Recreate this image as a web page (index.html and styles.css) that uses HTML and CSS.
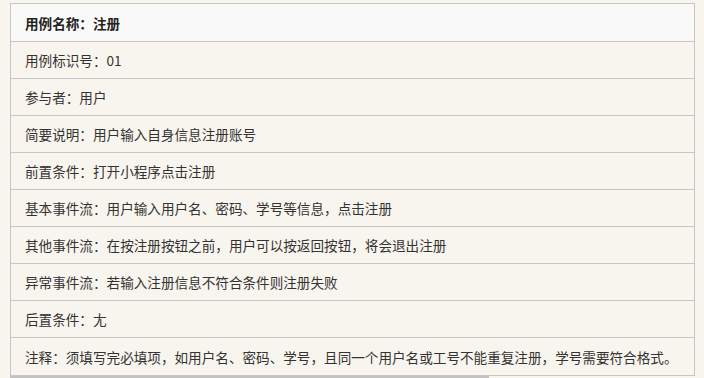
FILE: index.html
```html
<!DOCTYPE html>
<html lang="zh-CN">
<head>
<meta charset="utf-8">
<title>用例：注册</title>
<link rel="stylesheet" href="styles.css">
</head>
<body>
<div class="usecase">
  <div class="row head">用例名称：注册</div>
  <div class="row">用例标识号：01</div>
  <div class="row">参与者：用户</div>
  <div class="row">简要说明：用户输入自身信息注册账号</div>
  <div class="row">前置条件：打开小程序点击注册</div>
  <div class="row">基本事件流：用户输入用户名、密码、学号等信息，点击注册</div>
  <div class="row">其他事件流：在按注册按钮之前，用户可以按返回按钮，将会退出注册</div>
  <div class="row">异常事件流：若输入注册信息不符合条件则注册失败</div>
  <div class="row">后置条件：尢</div>
  <div class="row last">注释：须填写完必填项，如用户名、密码、学号，且同一个用户名或工号不能重复注册，学号需要符合格式。</div>
</div>
<div class="scrollbar"></div>
</body>
</html>
```
FILE: styles.css
```css
html, body {
  margin: 0;
  background: #f8f5ee;
}
body {
  padding: 3px 10px 0;
  font-family: "Noto Sans CJK SC", "Noto Sans", sans-serif;
  font-size: 13.6px;
  color: #333;
}
.usecase {
  width: 685px;
  box-sizing: border-box;
  border: 1px solid #c6c6c6;
  display: flex;
  flex-direction: column;
}
.row {
  display: flex;
  align-items: center;
  height: 36px;
  padding: 0 14px;
  border-top: 1px solid #c6c6c6;
  background: #f8f5ee;
  white-space: nowrap;
}
.row.head {
  border-top: 0;
  height: 37px;
  background: #f9f9f9;
  font-weight: bold;
  color: #222;
}
.row.last {
  height: 37px;
}
.scrollbar {
  width: 479px;
  height: 2px;
  background: #c2c2c2;
}
```
